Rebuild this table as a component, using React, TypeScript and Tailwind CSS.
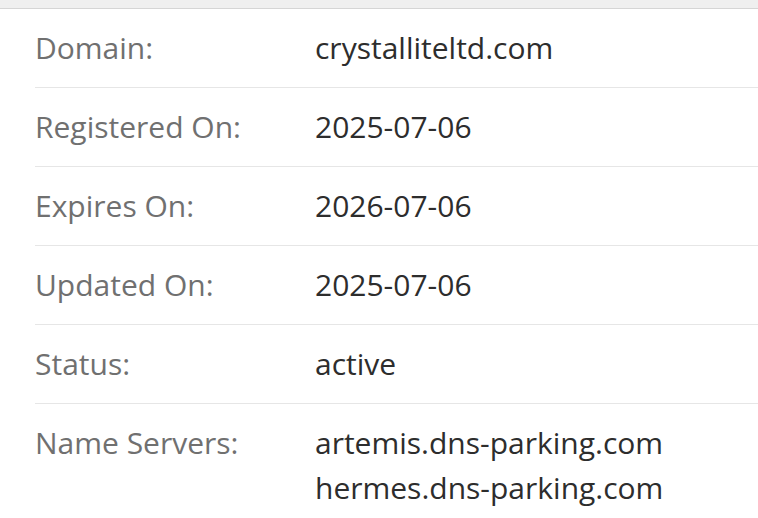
const rows: { label: string; values: string[] }[] = [
  { label: "Domain:", values: ["crystalliteltd.com"] },
  { label: "Registered On:", values: ["2025-07-06"] },
  { label: "Expires On:", values: ["2026-07-06"] },
  { label: "Updated On:", values: ["2025-07-06"] },
  { label: "Status:", values: ["active"] },
  { label: "Name Servers:", values: ["artemis.dns-parking.com", "hermes.dns-parking.com"] },
]

const App = () => {
  return (
    <div className="w-[758px] h-[518px] overflow-hidden bg-white" style={{ fontFamily: '"Open Sans", sans-serif' }}>
      <div className="h-[8px] bg-[#efefef] border-b border-[#d5d5d5] box-content" />
      <div className="pl-[35px]">
        {rows.map((row, i) => (
          <div
            key={row.label}
            className={`flex pt-[16px] pb-[17px] text-[30px] leading-[45px] ${i < rows.length - 1 ? "border-b border-[#e6e6e6]" : ""}`}
          >
            <div className="w-[280px] shrink-0 text-[#707070]">{row.label}</div>
            <div className="text-[#2d2d2d]">
              {row.values.map((v) => (
                <div key={v}>{v}</div>
              ))}
            </div>
          </div>
        ))}
      </div>
    </div>
  )
}

export default App
